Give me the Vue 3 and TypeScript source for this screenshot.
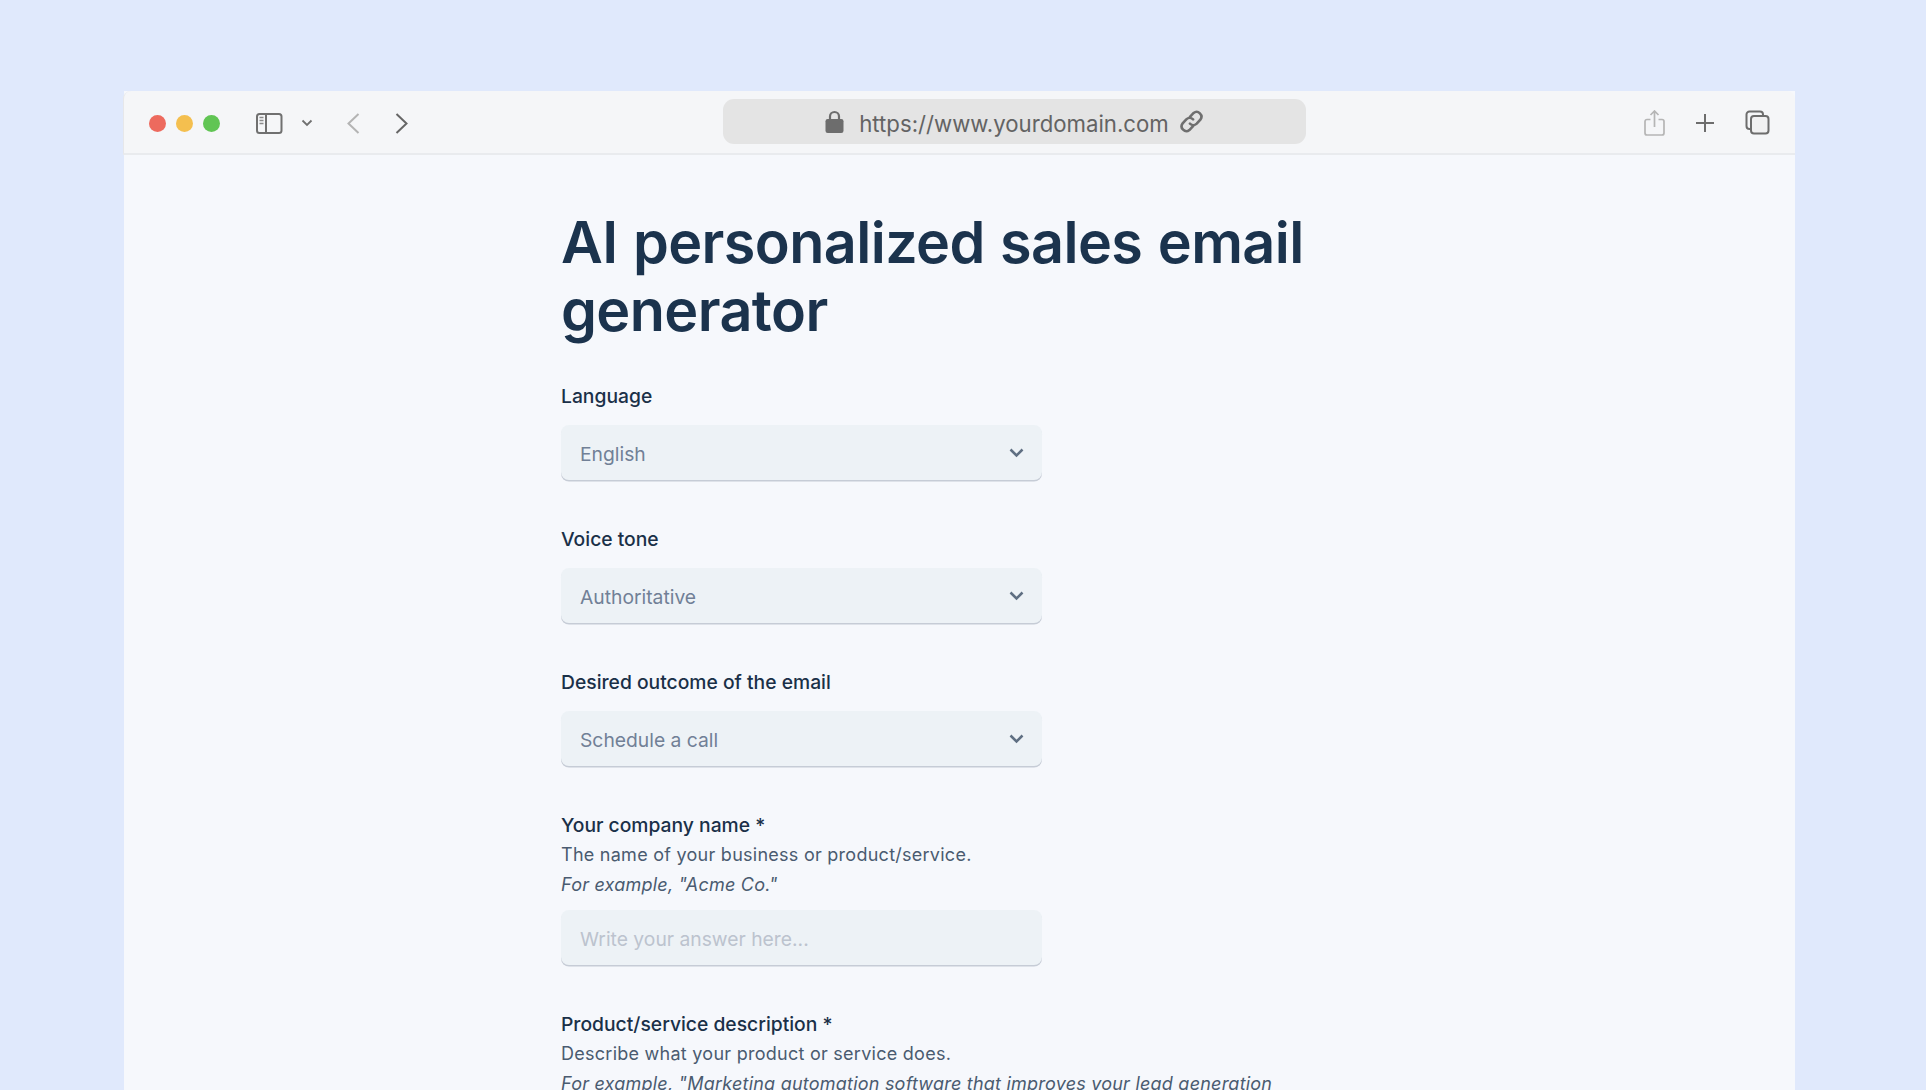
<script setup lang="ts">
interface Field {
  label: string
  kind: 'select' | 'input'
  value?: string
  help?: string
  example?: string
}
const fields: Field[] = [
  { label: 'Language', kind: 'select', value: 'English' },
  { label: 'Voice tone', kind: 'select', value: 'Authoritative' },
  { label: 'Desired outcome of the email', kind: 'select', value: 'Schedule a call' },
  {
    label: 'Your company name *',
    kind: 'input',
    help: 'The name of your business or product/service.',
    example: 'For example, "Acme Co."',
  },
  {
    label: 'Product/service description *',
    kind: 'input',
    help: 'Describe what your product or service does.',
    example: 'For example, "Marketing automation software that improves your lead generation',
  },
]
</script>

<template>
  <div class="stage">
    <div class="window">
      <header class="toolbar">
        <div class="left">
          <div class="lights">
            <span class="light red"></span>
            <span class="light yellow"></span>
            <span class="light green"></span>
          </div>
          <svg class="sidebar" width="28" height="23" viewBox="0 0 28 23" fill="none">
            <rect x="2" y="2" width="24.5" height="19" rx="2.5" stroke="#707070" stroke-width="2" />
            <path d="M11 2v19" stroke="#707070" stroke-width="2" />
            <path d="M4.5 5.5h4M4.5 8.5h4M4.5 11.5h4" stroke="#8a8a8a" stroke-width="1.6" />
          </svg>
          <svg class="mini" width="12" height="8" viewBox="0 0 12 8" fill="none">
            <path d="M1.5 1.5 6 6l4.5-4.5" stroke="#707070" stroke-width="1.8" />
          </svg>
          <svg class="back" width="13" height="21" viewBox="0 0 13 21" fill="none">
            <path d="M11.5 1 1.5 10.5l10 9.5" stroke="#b4b4b4" stroke-width="2" />
          </svg>
          <svg class="forward" width="13" height="21" viewBox="0 0 13 21" fill="none">
            <path d="M1.5 1l10 9.5-10 9.5" stroke="#666" stroke-width="2" />
          </svg>
        </div>
        <div class="address">
          <svg class="lock" width="19" height="23" viewBox="0 0 19 23" fill="none">
            <path d="M5 10V6.5a4.500 4.500 0 0 1 9 0V10" stroke="#6d6d6d" stroke-width="2.200" />
            <rect x="0.500" y="9" width="18" height="14" rx="2.200" fill="#6d6d6d" />
          </svg>
          <span class="url">https://www.yourdomain.com</span>
          <svg class="link" width="25" height="25" viewBox="0 0 24 24" fill="none" stroke="#6f6f6f" stroke-width="2.500">
            <path d="M10.500 7.500 14 3.800a4.600 4.600 0 0 1 6.500 6.400l-3.500 3.800a4.600 4.600 0 0 1-6.500 0" stroke-linecap="round" />
            <path d="M13.500 16.500 10 20.200a4.600 4.600 0 0 1-6.500-6.400L7 10a4.600 4.600 0 0 1 6.500 0" stroke-linecap="round" />
          </svg>
        </div>
        <div class="right">
          <svg width="21" height="26" viewBox="0 0 21 26" fill="none" stroke="#b5b5b5" stroke-width="1.7">
            <path d="M6.5 9.5H3a2 2 0 0 0-2 2V23a2 2 0 0 0 2 2h15a2 2 0 0 0 2-2V11.5a2 2 0 0 0-2-2h-3.5" />
            <path d="M10.5 17V1.5M6.5 5l4-4 4 4" />
          </svg>
          <svg width="20" height="20" viewBox="0 0 20 20" fill="none" stroke="#6d6d6d" stroke-width="2">
            <path d="M10 1v18M1 10h18" />
          </svg>
          <svg width="25" height="25" viewBox="0 0 25 25" fill="none" stroke="#6d6d6d" stroke-width="2">
            <path d="M6 19H4.500A3 3 0 0 1 1.500 16V4.500A3 3 0 0 1 4.500 1.500H15A3 3 0 0 1 18 4.500V6" />
            <rect x="6" y="6" width="17.500" height="17.500" rx="3" fill="#f1f1f2" />
          </svg>
        </div>
      </header>

      <main class="content">
        <h1 class="title">AI personalized sales email<br />generator</h1>
        <section v-for="f in fields" :key="f.label" class="field">
          <div class="label">{{ f.label }}</div>
          <div v-if="f.help" class="help">{{ f.help }}</div>
          <div v-if="f.example" class="example">{{ f.example }}</div>
          <div v-if="f.kind === 'select'" class="control select">
            <span class="value">{{ f.value }}</span>
            <svg width="15" height="10" viewBox="0 0 15 10" fill="none">
              <path d="M1.500 1.500 7.500 7.500l6-6" stroke="#5f6f82" stroke-width="2.500" />
            </svg>
          </div>
          <input v-else class="control text" placeholder="Write your answer here..." />
        </section>
      </main>
    </div>
  </div>
</template>

<style>
html,
body {
  margin: 0;
  background: #e0e9fc;
}
</style>

<style scoped>
.stage {
  height: 1090px;
  overflow: hidden;
  box-sizing: border-box;
  padding: 91px 131px 0 124px;
  font-family: Inter, "Liberation Sans", sans-serif;
}
.window {
  background: #f6f8fc;
  min-height: 999px;
}
.toolbar {
  height: 64px;
  box-sizing: border-box;
  background: #f5f6f8;
  border-bottom: 2px solid #e9ebee;
  border-left: 1px solid #e6e7ea;
  border-radius: 8px 8px 0 0;
  display: grid;
  grid-template-columns: 599px 583px 1fr;
  margin-left: -1px;
  padding-top: 8px;
}
.left {
  display: flex;
  align-items: center;
  height: 45px;
  margin-top: 1.500px;
}
.lights {
  display: flex;
  gap: 10px;
  margin-left: 25px;
}
.light {
  width: 17px;
  height: 17px;
  border-radius: 50%;
}
.red { background: #ed6a5e; }
.yellow { background: #f4bf4f; }
.green { background: #61c554; }
.sidebar { margin-left: 35px; }
.mini { margin-left: 17.500px; }
.back { margin-left: 34px; }
.forward { margin-left: 35px; }
.address {
  height: 45px;
  background: #e4e4e4;
  border-radius: 11px;
  display: flex;
  align-items: center;
  justify-content: center;
}
.lock { margin-right: 15px; }
.link { margin-left: 10px; }
.url {
  font-size: 22.200px;
  color: #636363;
  padding-top: 3px;
}
.right {
  display: flex;
  align-items: center;
  justify-content: flex-end;
  gap: 30px;
  height: 45px;
  padding-right: 25px;
  margin-top: 1px;
}
.content {
  margin-left: 437px;
  width: 760px;
}
.title {
  margin: 0;
  padding-top: 53px;
  font-size: 57.500px;
  line-height: 68px;
  font-weight: 600;
  color: #1b334d;
  letter-spacing: -0.6px;
  word-spacing: 1.500px;
}
.field {
  width: 481px;
  margin-bottom: 47px;
}
.title + .field {
  margin-top: 40px;
}
.label {
  font-size: 19.300px;
  line-height: 24px;
  font-weight: 500;
  color: #1a3048;
  margin-bottom: 17px;
}
.help {
  font-size: 18px;
  line-height: 31px;
  color: #4a5b70;
  letter-spacing: 0.26px;
  margin-top: -15px;
  white-space: nowrap;
}
.example {
  font-size: 18px;
  line-height: 30.500px;
  font-style: italic;
  color: #4a5b70;
  letter-spacing: 0.22px;
  white-space: nowrap;
  margin-bottom: 9.500px;
}
.control {
  display: flex;
  box-sizing: border-box;
  width: 100%;
  height: 55px;
  padding: 0 19px;
  background: #edf2f6;
  border: none;
  border-radius: 8px;
  box-shadow: 0 1.500px 0 #c6ccd6;
  align-items: center;
  justify-content: space-between;
  font-family: inherit;
  font-size: 19.300px;
  color: #718096;
  outline: none;
}
.value { padding-top: 2px; }
.text { padding-top: 2px; }
.select svg { margin-right: -1px; }
.text::placeholder {
  color: #bcc3ce;
  opacity: 1;
}
</style>
